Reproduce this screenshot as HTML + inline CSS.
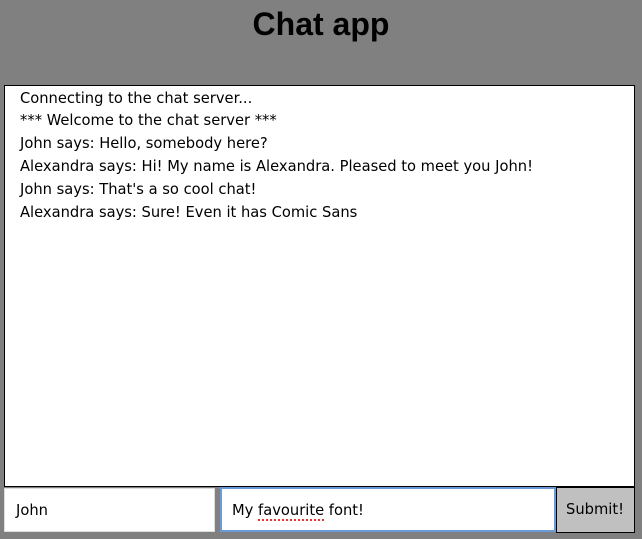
<!DOCTYPE html>
<html><head><style>
html,body{margin:0;padding:0}
body{width:642px;height:539px;background:#808080;position:relative;overflow:hidden;font-family:"DejaVu Sans","Liberation Sans",sans-serif}
h1{position:absolute;left:0;width:642px;top:4px;margin:0;text-align:center;font:bold 32px "Liberation Sans",sans-serif;color:#000;line-height:40px}
#log{position:absolute;left:4px;top:85px;width:629px;height:400px;background:#fff;border:1px solid #000}
#log div{position:absolute;left:15px;font-size:14.7px;line-height:22px;color:#000;white-space:nowrap}
.in{position:absolute;background:#fff;font-size:14.7px;line-height:20px;box-sizing:border-box}
</style></head><body>
<h1>Chat app</h1>
<div id="log">
<div style="top:2px">Connecting to the chat server...</div>
<div style="top:24px">*** Welcome to the chat server ***</div>
<div style="top:47px">John says: Hello, somebody here?</div>
<div style="top:70px">Alexandra says: Hi! My name is Alexandra. Pleased to meet you John!</div>
<div style="top:93px">John says: That's a so cool chat!</div>
<div style="top:116px">Alexandra says: Sure! Even it has Comic Sans</div>
</div>
<div class="in" style="left:4px;top:488px;width:211px;height:44px;border:1px solid #ddd;padding:12px 0 0 11px">John</div>
<div class="in" style="left:220px;top:487px;width:336px;height:45px;border:2px solid #6a9ad8;padding:12px 0 0 10px">My <span style="border-bottom:2px dotted #e33">favourite</span> font!</div>
<div class="in" style="left:556px;top:487px;width:79px;height:46px;background:#c0c0c0;border:1px solid #000;padding:12px 0 0 9px">Submit!</div>
</body></html>
